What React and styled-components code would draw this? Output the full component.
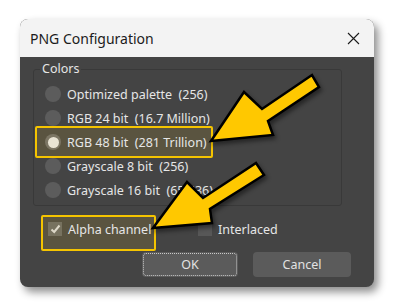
import React from 'react';
import styled, { createGlobalStyle } from 'styled-components';

const GlobalStyle = createGlobalStyle`
  html, body {
    margin: 0;
    background: #ffffff;
  }
  body {
    font-family: 'Noto Sans', 'Liberation Sans', sans-serif;
  }
`;

const Page = styled.div`
  position: relative;
  width: 394px;
  height: 307px;
  padding: 19px 0 0 20px;
  box-sizing: border-box;
`;

const Dialog = styled.div`
  width: 354px;
  height: 268px;
  border-radius: 8px;
  background: #444444;
  box-shadow: 4px 5px 8px rgba(0, 0, 0, 0.45);
  display: flex;
  flex-direction: column;
  overflow: hidden;
`;

const TitleBar = styled.div`
  height: 38px;
  flex: none;
  background: #f3f3f3;
  display: flex;
  align-items: center;
  justify-content: space-between;
  padding: 0 14px 0 10px;
  font-size: 14px;
  color: #1b1b1b;
`;

const Body = styled.div`
  flex: 1;
  display: flex;
  flex-direction: column;
  padding: 12px 23px 10px 13px;
  color: #e6e6e6;
  font-size: 12.5px;
`;

const GroupBox = styled.div`
  position: relative;
  margin-right: 9px;
  border: 1px solid #393939;
  border-radius: 3px;
  padding: 12px 0 3px 11px;
`;

const Legend = styled.span`
  position: absolute;
  top: -10px;
  left: 6px;
  padding: 0 2px;
  line-height: 18px;
  background: #444444;
`;

const Row = styled.div`
  position: relative;
  height: 24px;
  display: flex;
  align-items: center;
  gap: 6px;

  ${(p) =>
    p.$marked &&
    `
    &::before {
      content: '';
      position: absolute;
      left: -10px;
      top: -4px;
      width: 178px;
      height: 32px;
      box-sizing: border-box;
      border: 2px solid #f5c400;
      background: #5a5440;
      border-radius: 2px;
    }
  `}
`;

const Label = styled.span`
  position: relative;
  white-space: pre;
`;

const Radio = styled.span`
  position: relative;
  width: 16px;
  height: 16px;
  flex: none;
  border-radius: 50%;
  background: ${(p) => (p.$on ? '#7c7664' : '#5c5c5c')};
  display: flex;
  align-items: center;
  justify-content: center;

  &::after {
    content: '';
    display: ${(p) => (p.$on ? 'block' : 'none')};
    width: 11px;
    height: 11px;
    border-radius: 50%;
    background: #e9e4d4;
  }
`;

const OptionsRow = styled.div`
  display: flex;
  align-items: center;
  margin-top: 11px;
  padding-left: 15px;
  height: 24px;
`;

const CheckItem = styled.label`
  position: relative;
  display: flex;
  align-items: center;
  gap: 6px;
  width: ${(p) => p.$width || 'auto'};

  ${(p) =>
    p.$marked &&
    `
    &::before {
      content: '';
      position: absolute;
      left: -7px;
      top: -6px;
      width: 115px;
      height: 36px;
      box-sizing: border-box;
      border: 2px solid #f5c400;
      background: #5a5440;
      border-radius: 2px;
    }
  `}
`;

const Box = styled.span`
  position: relative;
  width: 14px;
  height: 14px;
  flex: none;
  background: ${(p) => (p.$on ? '#77725f' : '#575757')};
  display: flex;
  align-items: center;
  justify-content: center;
`;

const ButtonRow = styled.div`
  display: flex;
  justify-content: flex-end;
  gap: 15px;
  margin-top: 11px;
`;

const Button = styled.div`
  position: relative;
  width: ${(p) => p.$w}px;
  height: 25px;
  border-radius: 4px;
  background: #5b5b5b;
  color: #e2e2e2;
  display: flex;
  align-items: center;
  justify-content: center;

  ${(p) =>
    p.$focus &&
    `
    &::after {
      content: '';
      position: absolute;
      inset: 1px;
      border: 1px dotted #c8c8c8;
      border-radius: 3px;
    }
  `}
`;

const Overlay = styled.svg`
  position: absolute;
  left: 0;
  top: 0;
  pointer-events: none;
  filter: drop-shadow(2px 3px 2px rgba(0, 0, 0, 0.45));
`;

const options = [
  { text: 'Optimized palette  (256)' },
  { text: 'RGB 24 bit  (16.7 Million)' },
  { text: 'RGB 48 bit  (281 Trillion)', on: true },
  { text: 'Grayscale 8 bit  (256)' },
  { text: 'Grayscale 16 bit  (65,536)' },
];

const arrows = [
  '211,141 244,92 262,109 312,75 319,87 268,121 273,135',
  '153,228 187,182 203,198 256,163 264,175 210,209 212,223',
];

export default function App() {
  return (
    <>
      <GlobalStyle />
      <Page>
        <Dialog>
          <TitleBar>
            <span>PNG Configuration</span>
            <svg width="13" height="13" viewBox="0 0 13 13">
              <path d="M1 1 L12 12 M12 1 L1 12" stroke="#1b1b1b" strokeWidth="1.1" />
            </svg>
          </TitleBar>
          <Body>
            <GroupBox>
              <Legend>Colors</Legend>
              {options.map((o) => (
                <Row key={o.text} $marked={o.on}>
                  <Radio $on={o.on} />
                  <Label>{o.text}</Label>
                </Row>
              ))}
            </GroupBox>
            <OptionsRow>
              <CheckItem $marked $width="150px">
                <Box $on>
                  <svg width="11" height="10" viewBox="0 0 11 10">
                    <path d="M1.5 5.5 L4.2 8 L9.5 1.5" stroke="#ddd8c8" strokeWidth="2" fill="none" />
                  </svg>
                </Box>
                <Label>Alpha channel</Label>
              </CheckItem>
              <CheckItem>
                <Box />
                <Label>Interlaced</Label>
              </CheckItem>
            </OptionsRow>
            <ButtonRow>
              <Button $w={96} $focus>OK</Button>
              <Button $w={98}>Cancel</Button>
            </ButtonRow>
          </Body>
        </Dialog>
        <Overlay width="394" height="307" viewBox="0 0 394 307">
          {arrows.map((pts) => (
            <polygon
              key={pts}
              points={pts}
              fill="#ffc800"
              stroke="#000"
              strokeWidth="2.5"
              strokeLinejoin="miter"
            />
          ))}
        </Overlay>
      </Page>
    </>
  );
}
